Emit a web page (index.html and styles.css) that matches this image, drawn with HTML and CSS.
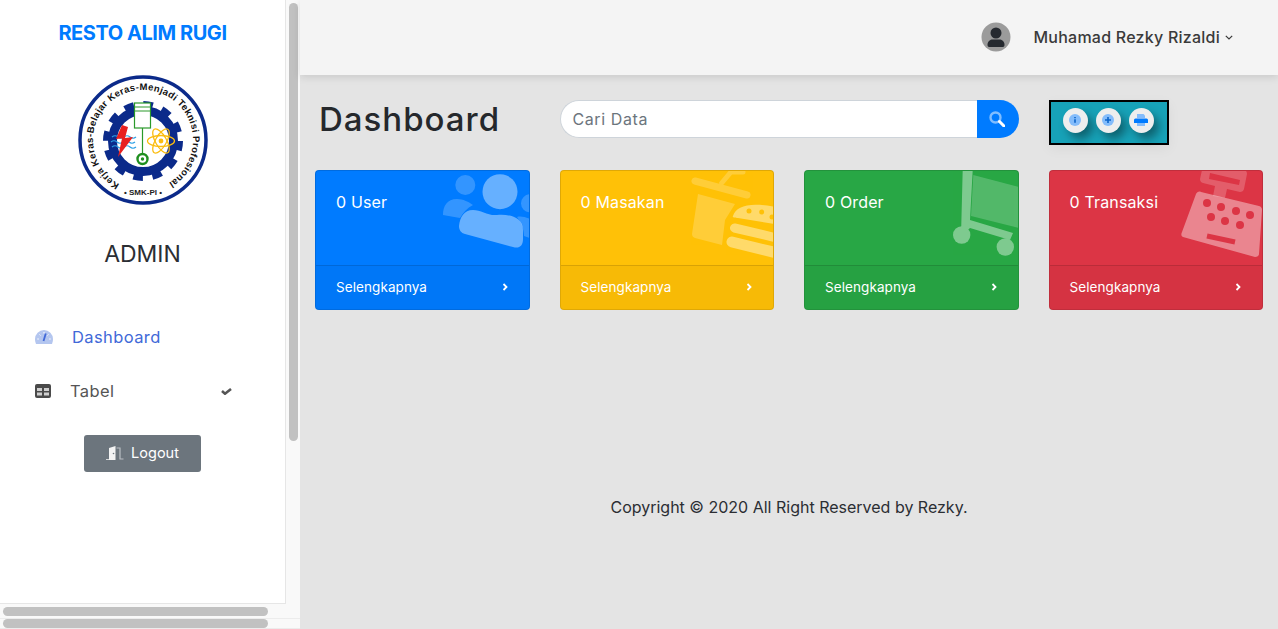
FILE: index.html
```html
<!DOCTYPE html>
<html lang="id">
<head>
<meta charset="utf-8">
<title>Dashboard</title>
<link rel="stylesheet" href="styles.css">
</head>
<body>
<aside class="sidebar">
  <div class="side-content">
    <h2 class="brand">RESTO ALIM RUGI</h2>
    <svg class="logo" viewBox="0 0 130 130" width="130" height="130">
      <defs><path id="ringtext" d="M41.500,109.100 A50,50 0 1 1 88.500,109.100"/></defs>
      <circle cx="65" cy="65" r="63" class="l-ring"/>
      <circle cx="65" cy="66" r="30.500" class="l-gear"/>
      <circle cx="65" cy="66" r="37" class="l-teeth"/>
      <text class="l-text"><textPath href="#ringtext" textLength="262" lengthAdjust="spacing">Kerja Keras-Belajar Keras-Menjadi Teknisi Profesional</textPath></text>
      <text x="65" y="120" class="l-smk">• SMK-PI •</text>
      <rect x="56.500" y="28" width="16" height="25" class="l-piston"/>
      <path d="M56.500 32h16M56.500 36h16M64.500 53v29" class="l-green"/>
      <circle cx="64.500" cy="84" r="5" class="l-green-wheel"/>
      <circle cx="64.500" cy="84" r="1.700" class="l-green-dot"/>
      <g class="l-atom">
        <ellipse cx="83" cy="66" rx="13.500" ry="5.500"/>
        <ellipse cx="83" cy="66" rx="13.500" ry="5.500" transform="rotate(60 83 66)"/>
        <ellipse cx="83" cy="66" rx="13.500" ry="5.500" transform="rotate(120 83 66)"/>
      </g>
      <circle cx="83" cy="66" r="2.400" class="l-atom-core"/>
      <path d="M34 62q3-2.500 6 0t6 0 6 0 6 0M33 67q3-2.500 6 0t6 0 6 0 6 0M34 72q3-2.500 6 0t6 0 6 0 6 0" class="l-waves"/>
      <path d="M44 50 L38 64 L44 63.500 L40 82 L55 62 L47 63 L50 52 Z" class="l-bolt"/>
    </svg>
    <h3 class="role">ADMIN</h3>
    <nav class="menu">
      <a class="menu-item active">
        <svg class="menu-icon" viewBox="0 0 18 14" width="18" height="14">
          <path d="M9 0a9 9 0 0 1 9 9c0 2-.5 3.400-1 5H1c-.5-1.600-1-3-1-5a9 9 0 0 1 9-9z" class="gauge-face"/>
          <path d="M4.500 4.500 5.500 5.500M9 2v1.500M2.300 9h1.500M14.200 9h1.500M13.500 4.500l-1 1" class="gauge-ticks"/>
          <path d="M10.800 3.500 8.500 11" class="gauge-needle"/>
        </svg>
        <span>Dashboard</span>
      </a>
      <a class="menu-item">
        <svg class="menu-icon tabel-icon" viewBox="0 0 16 14" width="16" height="14">
          <rect width="16" height="14" rx="2" class="table-bg"/>
          <path d="M2 4h5v3H2zM9 4h5v3H9zM2 8.500h5v3H2zM9 8.500h5v3H9z" class="table-cell"/>
        </svg>
        <span class="menu-label">Tabel</span>
        <svg class="check" viewBox="0 0 11 7" width="11" height="7"><path d="M1 3 4 5.700 10 1" class="check-line"/></svg>
      </a>
    </nav>
    <a class="logout">
      <svg viewBox="0 0 18 14" width="18" height="14">
        <path d="M2 13.200h1V2l6.500-2v14H0v-.8z" class="door"/>
        <path d="M10.500 2H14v11h3.500" class="door-frame"/>
        <circle cx="7.500" cy="7.500" r=".8" class="door-knob"/>
      </svg>
      <span>Logout</span>
    </a>
  </div>
  <div class="vtrack"><div class="vthumb"></div></div>
  <div class="htrack first"><div class="hthumb"></div></div>
  <div class="corner"></div>
  <div class="htrack second"><div class="hthumb"></div></div>
</aside>

<main class="main">
  <header class="topbar">
    <svg class="avatar" viewBox="0 0 30 30" width="30" height="30">
      <circle cx="15" cy="15" r="14.500" class="av-bg"/>
      <circle cx="15" cy="11" r="5.500" class="av-fg"/>
      <path d="M6.500 23c0-4 3-5.500 5-5.500h7c2 0 5 1.500 5 5.500 0 1.500-1 2-2 2h-13c-1 0-2-.5-2-2z" class="av-fg"/>
    </svg>
    <span class="user-name">Muhamad Rezky Rizaldi</span>
    <svg class="caret" viewBox="0 0 8 5" width="8" height="5"><path d="M.8.800 4 4 7.200.800" class="caret-line"/></svg>
  </header>

  <div class="grid top-row">
    <h1 class="title">Dashboard</h1>
    <form class="search">
      <div class="search-input">Cari Data</div>
      <div class="search-btn">
        <svg viewBox="0 0 16 16" width="16" height="16">
          <circle cx="6.500" cy="6.500" r="5" class="lens"/>
          <path d="M10.500 10.500 15 15" class="handle"/>
        </svg>
      </div>
    </form>
    <div class="tools">
      <span class="tool">
        <svg viewBox="0 0 12 12" width="12" height="12"><circle cx="6" cy="6" r="6" class="duo"/><path d="M6 5.300v3.500M6 3v1.200" class="duo-line"/></svg>
      </span>
      <span class="tool">
        <svg viewBox="0 0 12 12" width="12" height="12"><circle cx="6" cy="6" r="6" class="duo"/><path d="M6 3v6M3 6h6" class="duo-line"/></svg>
      </span>
      <span class="tool">
        <svg viewBox="0 0 14 12" width="14" height="12"><path d="M3 0h6.500L11 1.500V4H3z" class="duo"/><path d="M1.500 4.500h11A1.500 1.500 0 0 1 14 6v3H0V6a1.500 1.500 0 0 1 1.500-1.500z" class="duo-solid"/><path d="M3 9h8v3H3z" class="duo"/></svg>
      </span>
    </div>
  </div>

  <section class="grid cards">
    <article class="card blue">
      <div class="card-body">
        <svg class="art" viewBox="0 0 215 95">
          <g class="soft">
            <circle cx="150.300" cy="15" r="10"/>
            <circle cx="215" cy="33.300" r="9"/>
            <path d="M128 45c0-9 4-16 14-16 6 0 12 3 16 6-6 3-10 8-13 13z"/>
            <path d="M202 47c4-1 8 0 13 2v19l-6-2c0-7-3-14-7-19z"/>
          </g>
          <g class="strong">
            <circle cx="185" cy="21.700" r="17.500"/>
            <path d="M158 40c8 0 15 6 24 5 10-1 26 1 26 15v9c0 7-4 10-10 8l-48-13c-4-1-6-4-6-8 1-9 5-16 14-16z"/>
          </g>
        </svg>
        <p class="card-title">0 User</p>
      </div>
      <div class="card-foot"><span>Selengkapnya</span><svg viewBox="0 0 6 8" width="6" height="8"><path d="M1.500 1 4.500 4l-3 3" class="foot-chev"/></svg></div>
    </article>
    <article class="card yellow">
      <div class="card-body">
        <svg class="art" viewBox="0 0 215 95">
          <g class="soft">
            <path d="M135 11l52 14" class="art-line thick"/>
            <path d="M161.700 13 171 2h12" class="art-line"/>
            <path d="M138 24l37 10-10 16-3 25-27-7c-2-1-3-2-3-4z"/>
          </g>
          <g class="strong">
            <path d="M173 46c3-10 17-14 42-9v17l-37-6c-3-.5-6 0-5-2z"/>
            <path d="M174.500 58 217 68" class="art-line thick-10"/>
            <path d="M172 72 217 83" class="art-line thick-11"/>
          </g>
          <g class="fill-bg">
            <circle cx="189" cy="41" r="2.500"/><circle cx="201.700" cy="42" r="2.500"/><circle cx="212" cy="47" r="2.500"/>
          </g>
        </svg>
        <p class="card-title">0 Masakan</p>
      </div>
      <div class="card-foot"><span>Selengkapnya</span><svg viewBox="0 0 6 8" width="6" height="8"><path d="M1.500 1 4.500 4l-3 3" class="foot-chev"/></svg></div>
    </article>
    <article class="card green">
      <div class="card-body">
        <svg class="art" viewBox="0 0 215 95">
          <path d="M169.300 5 215 17v41l-48-12z" class="soft"/>
          <g class="strong">
            <path d="M158.700 0h10l-2.700 50 43 13-3 7-40-12-9 8z"/>
            <circle cx="157.700" cy="65" r="8.700"/>
            <circle cx="201.300" cy="77" r="8.700"/>
          </g>
        </svg>
        <p class="card-title">0 Order</p>
      </div>
      <div class="card-foot"><span>Selengkapnya</span><svg viewBox="0 0 6 8" width="6" height="8"><path d="M1.500 1 4.500 4l-3 3" class="foot-chev"/></svg></div>
    </article>
    <article class="card red">
      <div class="card-body">
        <svg class="art" viewBox="0 0 215 95">
          <path d="M153 0h42c2 0 3 2 3 4l-3 15c-.5 2-2 3-4 3l-13-3-2 9-12-2 2-10-12-3c-2-.5-3-2-3-4zm8 3-1 6 30 6 1-5z" class="soft evenodd"/>
          <path d="M152 22 210 36c2 .5 3 2 3 4l-3 44c0 2-2 3-4 3l-72-20c-2-1-2-3-1-5l14-38c1-2 3-3 5-2z" class="strong"/>
          <g class="fill-bg">
            <circle cx="158" cy="33" r="4"/><circle cx="172" cy="37" r="4"/><circle cx="187" cy="41" r="4"/><circle cx="201" cy="45" r="4"/>
            <circle cx="162" cy="47" r="4"/><circle cx="176" cy="51" r="4"/><circle cx="191" cy="55" r="4"/>
          </g>
          <path d="M158 66 186 72" class="bar-bg"/>
        </svg>
        <p class="card-title">0 Transaksi</p>
      </div>
      <div class="card-foot"><span>Selengkapnya</span><svg viewBox="0 0 6 8" width="6" height="8"><path d="M1.500 1 4.500 4l-3 3" class="foot-chev"/></svg></div>
    </article>
  </section>

  <footer class="copyright">Copyright © 2020 All Right Reserved by Rezky.</footer>
</main>
</body>
</html>
```
FILE: styles.css
```css
* { box-sizing: border-box; }
html, body { height: 100%; }
body {
  margin: 0;
  display: flex;
  height: 629px;
  overflow: hidden;
  font-family: Inter, "Open Sans", sans-serif;
  color: #212529;
  background: #e4e4e4;
}

/* Sidebar */
.sidebar {
  width: 300px;
  flex: none;
  display: grid;
  grid-template-columns: 286px 14px;
  grid-template-rows: 604px 14px 11px;
  background: #f9f9f9;
}
.side-content {
  background: #fff;
  border-right: 1px solid #e6e6e6;
  border-bottom: 1px solid #e6e6e6;
  display: flex;
  flex-direction: column;
  align-items: center;
  padding-top: 18px;
  overflow: hidden;
}
.brand {
  margin: 0;
  font-size: 20px;
  line-height: 30px;
  font-weight: 700;
  color: #007bff;
  letter-spacing: -.45px;
}
.logo { margin-top: 27px; flex: none; }
.l-ring { fill: #fff; stroke: #0b2a8a; stroke-width: 3.5; }
.l-gear { fill: #fff; stroke: #0b2a8a; stroke-width: 9; }
.l-teeth { fill: none; stroke: #0b2a8a; stroke-width: 6; stroke-dasharray: 9.69 9.69; }
.l-text { font-family: "Liberation Sans", sans-serif; font-size: 9.5px; font-weight: 700; fill: #111; }
.l-smk { font-family: "Liberation Sans", sans-serif; font-size: 8px; font-weight: 700; fill: #222; text-anchor: middle; }
.l-piston { fill: #fff; stroke: #2a9a2a; stroke-width: 1.2; }
.l-green { fill: none; stroke: #2a9a2a; stroke-width: 1.2; }
.l-green-wheel { fill: #fff; stroke: #1f8f1f; stroke-width: 2.4; }
.l-green-dot { fill: #1f8f1f; }
.l-atom ellipse { fill: none; stroke: #fbbc0f; stroke-width: 1.3; }
.l-atom-core { fill: #fbbc0f; }
.l-waves { fill: none; stroke: #2b9fe6; stroke-width: 1.2; }
.l-bolt { fill: #e8201f; }
.role {
  margin: 31px 0 0;
  font-size: 23px;
  line-height: 36px;
  font-weight: 400;
  color: #2b2e33;
}
.menu { width: 100%; margin-top: 47px; display: flex; flex-direction: column; gap: 18px; }
.menu-item {
  display: flex;
  align-items: center;
  height: 36px;
  padding: 0 53px 0 35px;
  font-size: 16.500px;
  letter-spacing: .4px;
  color: #555;
}
.menu-item.active { color: #4169d8; }
.menu-icon { flex: none; margin-right: 19px; }
.menu-label { flex: 1; }
.gauge-face { fill: #b4c6ef; }
.gauge-ticks { fill: none; stroke: #fff; stroke-width: 1; }
.gauge-needle { stroke: #4169d8; stroke-width: 1.8; fill: none; }
.table-bg { fill: #4a4a4a; }
.table-cell { fill: #cfcfcf; }
.check-line { fill: none; stroke: #555; stroke-width: 2.6; }
.logout {
  margin-top: 26px;
  width: 117px;
  height: 37px;
  flex: none;
  padding-bottom: 2px;
  background: #6c757d;
  border-radius: 3px;
  color: #fff;
  font-size: 14.500px;
  display: flex;
  align-items: center;
  justify-content: center;
  gap: 7px;
}
.door { fill: #f3f3f3; }
.door-frame { fill: none; stroke: #b9bec3; stroke-width: 1.2; }
.door-knob { fill: #6c757d; }
.vtrack { background: #f9f9f9; padding: 3px 2px 0 3px; }
.vthumb { width: 9px; height: 438px; background: #c1c1c1; border-radius: 5px; }
.htrack { padding: 3px 0 0 3px; }
.htrack.first { grid-column: 1; grid-row: 2; background: #f9f9f9; }
.htrack.second { grid-column: 1 / -1; grid-row: 3; border-top: 1px solid #ececec; border-bottom: 1px solid #ececec; padding-top: 0; }
.corner { grid-column: 2; grid-row: 2; background: #f9f9f9; }
.hthumb { width: 265px; height: 9px; background: #c1c1c1; border-radius: 5px; }

/* Main */
.main { flex: 1; min-width: 0; display: flex; flex-direction: column; background: #e4e4e4; }
.topbar {
  height: 75px;
  flex: none;
  background: #f4f4f4;
  box-shadow: 0 2px 8px rgba(0, 0, 0, .12);
  display: flex;
  align-items: center;
  padding: 0 45px 1px 0;
  justify-content: flex-end;
}
.avatar { margin-right: 23px; }
.av-bg { fill: #9b9b9b; }
.av-fg { fill: #262a30; }
.user-name { font-size: 16px; font-weight: 500; letter-spacing: .24px; color: #3a3a3a; }
.caret { margin-left: 5px; }
.caret-line { fill: none; stroke: #3a3a3a; stroke-width: 1.2; }
.grid {
  display: grid;
  grid-template-columns: repeat(4, 1fr);
  column-gap: 30px;
  padding: 0 15px;
}
.top-row { margin-top: 25px; height: 45px; align-items: start; }
.title {
  margin: 0;
  padding-left: 4px;
  font-size: 33px;
  line-height: 38px;
  font-weight: 500;
  letter-spacing: 1px;
  color: #25282c;
}
.search { grid-column: span 2; display: flex; height: 38px; margin: 0; }
.search-input {
  flex: 1;
  background: #fff;
  border: 1px solid #ced4da;
  border-right: 0;
  border-radius: 19px 0 0 19px;
  padding-left: 12px;
  font-size: 16px;
  line-height: 36px;
  letter-spacing: .6px;
  color: #6c757d;
}
.search-btn {
  width: 42px;
  background: #007bff;
  border-radius: 0 19px 19px 0;
  display: flex;
  align-items: center;
  justify-content: center;
  padding-right: 1px;
}
.lens { fill: none; stroke: #80bdff; stroke-width: 2.4; }
.handle { stroke: #fff; stroke-width: 3; stroke-linecap: round; fill: none; }
.tools {
  width: 120px;
  height: 45px;
  background: #17a2b8;
  border: 2px solid #000;
  display: flex;
  align-items: center;
  padding: 0 0 5px 12px;
  gap: 8px;
  box-shadow: 0 4px 12px rgba(0, 0, 0, .05);
}
.tool {
  width: 25px;
  height: 25px;
  border-radius: 50%;
  background: #eee;
  display: flex;
  align-items: center;
  justify-content: center;
  box-shadow: 5px 6px 10px rgba(0, 0, 0, .4);
}
.duo { fill: #84bcfb; }
.duo-solid { fill: #007bff; }
.duo-line { stroke: #0b63c9; stroke-width: 1.6; fill: none; }

/* Cards */
.cards { margin-top: 25px; }
.card {
  height: 140px;
  border: 1px solid rgba(0, 0, 0, .125);
  border-radius: 4px;
  color: #fff;
  display: flex;
  flex-direction: column;
  overflow: hidden;
}
.card.blue { background: #007bff; --bg: #007bff; }
.card.yellow { background: #ffc107; --bg: #ffc107; }
.card.green { background: #28a745; --bg: #28a745; }
.card.red { background: #dc3545; --bg: #dc3545; }
.card-body { position: relative; flex: 1; padding: 20px 20px; overflow: hidden; }
.art { position: absolute; top: -1px; left: -1px; width: 215px; height: 95px; }
.soft { fill: #fff; stroke: none; opacity: .2; }
.strong { fill: #fff; opacity: .4; }
.evenodd { fill-rule: evenodd; }
.fill-bg { fill: var(--bg); }
.bar-bg { stroke: var(--bg); stroke-width: 5; fill: none; }
.art-line { fill: none; stroke: #fff; stroke-width: 5; stroke-linecap: round; }
.art-line.thick { stroke-width: 7; }
.art-line.thick-10 { stroke-width: 9; }
.art-line.thick-11 { stroke-width: 11; }
.card-title { position: relative; margin: 0; font-size: 16px; line-height: 22px; letter-spacing: .15px; }
.card-foot {
  height: 44px;
  flex: none;
  padding: 0 21px 2px 20px;
  display: flex;
  align-items: center;
  justify-content: space-between;
  background: rgba(0, 0, 0, .03);
  border-top: 1px solid rgba(0, 0, 0, .125);
  font-size: 13.500px;
  letter-spacing: .08px;
}
.foot-chev { fill: none; stroke: #fff; stroke-width: 1.8; }
.copyright {
  margin-top: 185px;
  text-align: center;
  font-size: 16px;
  line-height: 24px;
  color: #2b2e33;
}
```
